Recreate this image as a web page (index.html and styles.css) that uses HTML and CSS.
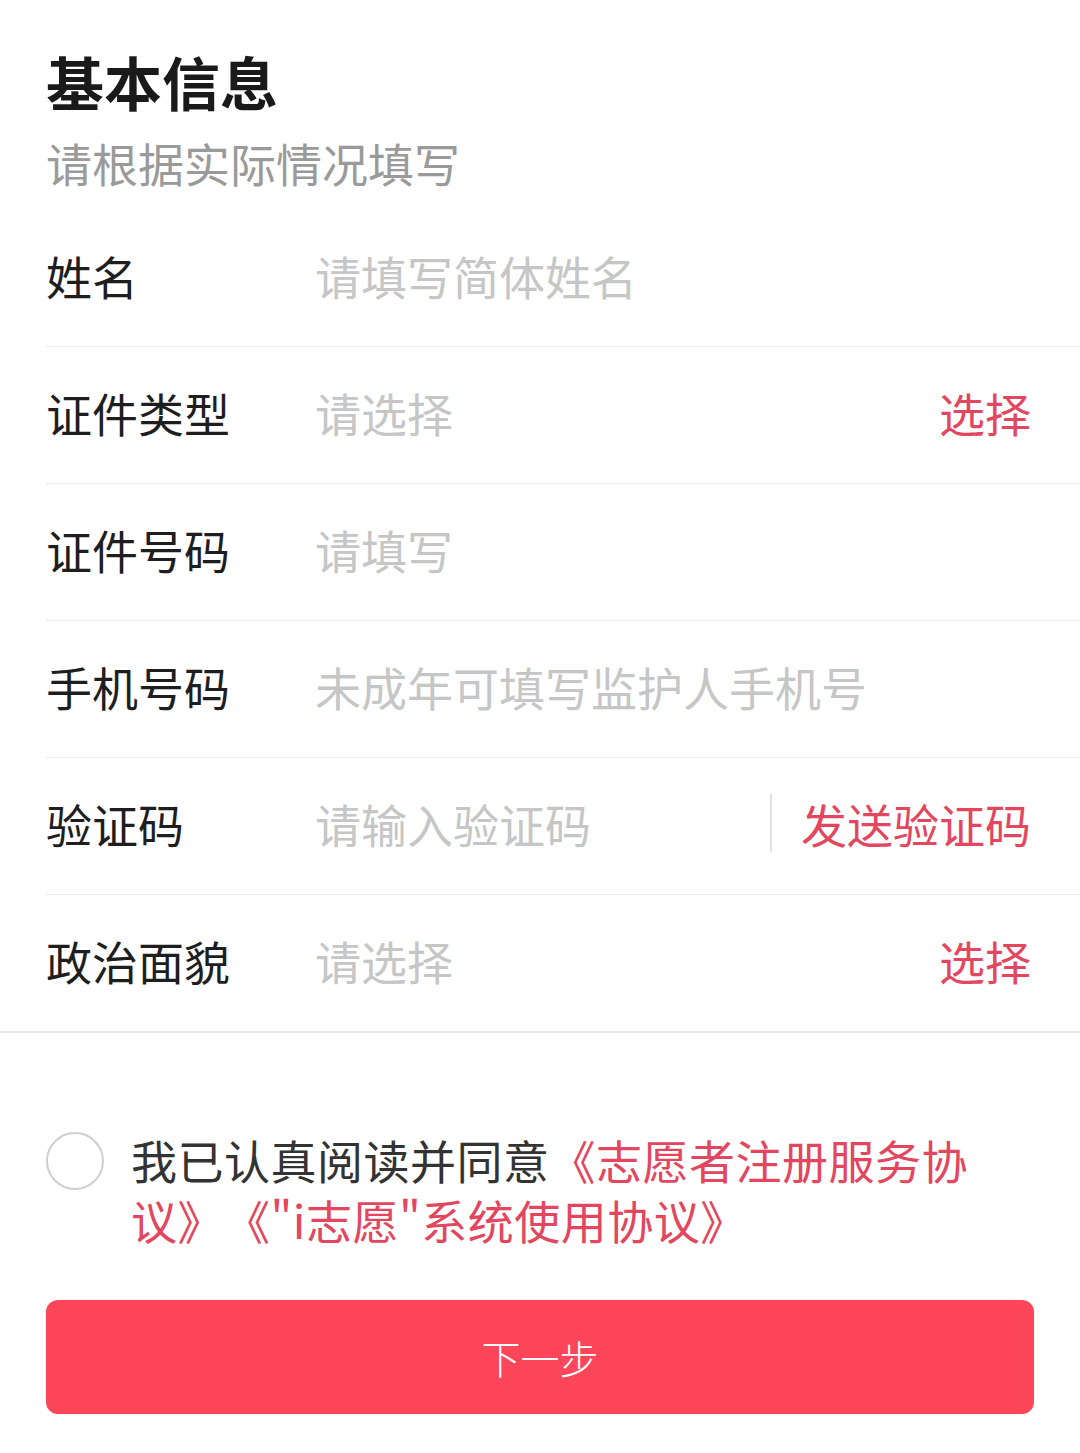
FILE: index.html
```html
<!DOCTYPE html>
<html lang="zh-CN">
<head>
    <meta charset="UTF-8">
    <meta name="viewport" content="width=device-width, initial-scale=1.0">
    <title>基本信息</title>
    <link rel="stylesheet" href="styles.css">
</head>
<body>
    <!-- 页头 -->
    <div class="header">
        <h1 class="title">基本信息</h1>
        <p class="subtitle">请根据实际情况填写</p>
    </div>

    <!-- 表单 -->
    <form class="form">
        <div class="row">
            <span class="label">姓名</span>
            <span class="placeholder">请填写简体姓名</span>
        </div>
        <div class="row">
            <span class="label">证件类型</span>
            <span class="placeholder">请选择</span>
            <span class="action">选择</span>
        </div>
        <div class="row">
            <span class="label">证件号码</span>
            <span class="placeholder">请填写</span>
        </div>
        <div class="row">
            <span class="label">手机号码</span>
            <span class="placeholder">未成年可填写监护人手机号</span>
        </div>
        <div class="row">
            <span class="label">验证码</span>
            <span class="placeholder">请输入验证码</span>
            <span class="split"></span>
            <span class="action">发送验证码</span>
        </div>
        <div class="row last">
            <span class="label">政治面貌</span>
            <span class="placeholder">请选择</span>
            <span class="action">选择</span>
        </div>
    </form>

    <!-- 协议 -->
    <div class="agree">
        <span class="check"></span>
        <p class="agree-text">我已认真阅读并同意<span class="link">《志愿者注册服务协</span><br><span class="link">议》《"i志愿"系统使用协议》</span></p>
    </div>

    <button type="button" class="next">下一步</button>
</body>
</html>
```

FILE: styles.css
```css
/* 页面基本样式 */
body {
    margin: 0;
    padding: 0;
    background-color: #fff;
    font-family: "Noto Sans CJK SC", "Noto Sans", sans-serif;
    color: #222;
}

.header {
    padding: 46px 46px 0;
}

.title {
    margin: 0;
    font-size: 58px;
    line-height: 70px;
    font-weight: bold;
    color: #1a1a1a;
}

.subtitle {
    margin: 16px 0 0;
    font-size: 46px;
    line-height: 60px;
    color: #9a9a9a;
}

.form {
    margin-top: 18px;
    border-bottom: 2px solid #e8e8e8;
}

.row {
    display: flex;
    align-items: center;
    height: 130px;
    margin-left: 46px;
    padding: 0 49px 6px 0;
    border-bottom: 1px solid #ebebeb;
    font-size: 46px;
}

.row.last {
    border-bottom: none;
}

.label {
    width: 269px;
    flex-shrink: 0;
    color: #1e1e1e;
}

.placeholder {
    flex: 1;
    color: #c6c6c6;
}

.action {
    color: #e2475f;
}

.split {
    width: 2px;
    height: 58px;
    margin-right: 29px;
    background-color: #e2e2e2;
}

.agree {
    display: flex;
    align-items: flex-start;
    margin: 96px 46px 0 46px;
}

.check {
    flex-shrink: 0;
    width: 54px;
    height: 54px;
    margin-top: 3px;
    border: 2px solid #cfcfcf;
    border-radius: 50%;
}

.agree-text {
    margin: 0 0 0 27px;
    font-size: 46px;
    line-height: 60px;
    letter-spacing: 0.5px;
    color: #333;
    text-spacing-trim: space-all;
}

.link {
    color: #e2475f;
}

.next {
    display: block;
    width: 988px;
    height: 114px;
    margin: 51px 0 0 46px;
    border: none;
    border-radius: 12px;
    background-color: #fd4659;
    color: #fff;
    font-family: "Noto Sans CJK SC", sans-serif;
    font-size: 39px;
    font-weight: 300;
    cursor: pointer;
}
```
